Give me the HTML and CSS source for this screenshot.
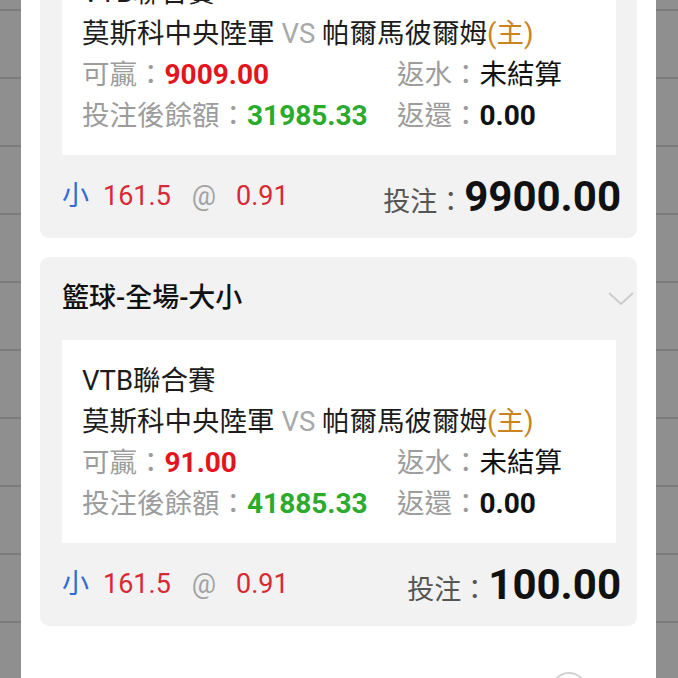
FILE: index.html
```html
<!DOCTYPE html>
<html lang="zh-Hant">
<head>
<meta charset="utf-8">
<title>注單</title>
<link rel="stylesheet" href="styles.css">
</head>
<body>
<div class="screen">
  <div class="strip strip-left"></div>
  <main class="panel">
    <div class="list">
      <section class="card">
        <header class="card-head">
          <h2 class="card-title">籃球-全場-大小</h2>
          <svg class="chevron" width="26" height="14" viewBox="0 0 26 14"><path d="M1 1 L13 12 L25 1" fill="none" stroke="#cccccc" stroke-width="2"/></svg>
        </header>
        <div class="detail">
          <div class="line span">VTB聯合賽</div>
          <div class="line span">莫斯科中央陸軍 <span class="vs">VS</span> 帕爾馬彼爾姆<span class="home">(主)</span></div>
          <div class="line"><span class="lbl">可贏：</span><b class="red">9009.00</b></div>
          <div class="line"><span class="lbl">返水：</span><span class="dark">未結算</span></div>
          <div class="line"><span class="lbl">投注後餘額：</span><b class="green">31985.33</b></div>
          <div class="line"><span class="lbl">返還：</span><b class="dark">0.00</b></div>
        </div>
        <footer class="card-foot">
          <div class="odds"><span class="side">小</span><span class="num">161.5</span><span class="at">@</span><span class="num">0.91</span></div>
          <div class="stake"><span class="stake-lbl">投注：</span><b class="stake-val">9900.00</b></div>
        </footer>
      </section>
      <section class="card">
        <header class="card-head">
          <h2 class="card-title">籃球-全場-大小</h2>
          <svg class="chevron" width="26" height="14" viewBox="0 0 26 14"><path d="M1 1 L13 12 L25 1" fill="none" stroke="#cccccc" stroke-width="2"/></svg>
        </header>
        <div class="detail">
          <div class="line span">VTB聯合賽</div>
          <div class="line span">莫斯科中央陸軍 <span class="vs">VS</span> 帕爾馬彼爾姆<span class="home">(主)</span></div>
          <div class="line"><span class="lbl">可贏：</span><b class="red">91.00</b></div>
          <div class="line"><span class="lbl">返水：</span><span class="dark">未結算</span></div>
          <div class="line"><span class="lbl">投注後餘額：</span><b class="green">41885.33</b></div>
          <div class="line"><span class="lbl">返還：</span><b class="dark">0.00</b></div>
        </div>
        <footer class="card-foot">
          <div class="odds"><span class="side">小</span><span class="num">161.5</span><span class="at">@</span><span class="num">0.91</span></div>
          <div class="stake"><span class="stake-lbl">投注：</span><b class="stake-val">100.00</b></div>
        </footer>
      </section>
      <div class="more-row"><span class="round-btn"></span></div>
    </div>
  </main>
  <div class="strip strip-right"></div>
</div>
</body>
</html>
```
FILE: styles.css
```css
* { box-sizing: border-box; }
html, body { margin: 0; padding: 0; }
body {
  width: 678px;
  height: 678px;
  overflow: hidden;
  font-family: Roboto, "Noto Sans CJK TC", sans-serif;
  color: #1c1c1c;
}
.screen {
  display: flex;
  height: 678px;
}
.strip {
  background-color: #8f8f8f;
  background-image: repeating-linear-gradient(to bottom,
    transparent 0, transparent 9px,
    #7b7b7b 9px, #7b7b7b 11px,
    transparent 11px, transparent 68px);
}
.strip-left { width: 21px; flex: none; }
.strip-right { width: 22px; flex: none; }
.panel {
  flex: 1;
  background: #fff;
  overflow: hidden;
}
.list {
  display: flex;
  flex-direction: column;
  gap: 19px;
  padding: 0 19px;
  margin-top: -131px;
}
.card {
  background: #f2f2f2;
  border-radius: 9px;
  display: flex;
  flex-direction: column;
}
.card-head {
  height: 83px;
  display: flex;
  align-items: center;
  justify-content: space-between;
  padding: 0 3px 0 22px;
}
.card-title {
  margin: 0;
  font-size: 27px;
  font-weight: 500;
  line-height: 1;
  color: #111;
}
.chevron { display: block; }
.detail {
  margin: 0 21px 0 22px;
  background: #fff;
  padding: 20px 20px 19px;
  display: grid;
  grid-template-columns: 315px 1fr;
  grid-auto-rows: 41px;
  font-size: 27.5px;
  white-space: nowrap;
}
.line {
  display: flex;
  align-items: baseline;
  line-height: 41px;
}
.line.span { grid-column: 1 / -1; color: #1c1c1c; }
.vs { color: #a8a8a8; margin: 0 0.25em; }
.home { color: #c98420; }
.lbl { color: #9c9c9c; }
.red { color: #e2141c; font-size: 28px; font-weight: 700; }
.green { color: #2bab2b; font-size: 28px; font-weight: 700; }
.dark { color: #111; }
b.dark { font-size: 28px; font-weight: 700; }
.card-foot {
  height: 83px;
  display: flex;
  align-items: center;
  justify-content: space-between;
  padding: 0 16px 0 22px;
}
.odds {
  display: flex;
  align-items: baseline;
  gap: 14px;
  font-size: 27px;
  line-height: 1;
}
.side { color: #2f6dd3; }
.num { color: #d92a33; }
.at { color: #a3a3a3; margin: 0 6px 0 7px; }
.stake {
  display: flex;
  align-items: baseline;
  line-height: 1;
}
.stake-lbl { font-size: 27px; color: #555; }
.stake-val { font-size: 42px; font-weight: 700; color: #111; }
.more-row {
  display: flex;
  justify-content: flex-end;
  padding: 27px 50px 0 0;
}
.round-btn {
  width: 36px;
  height: 36px;
  border-radius: 50%;
  border: 2px solid #d4d4d4;
}
```
